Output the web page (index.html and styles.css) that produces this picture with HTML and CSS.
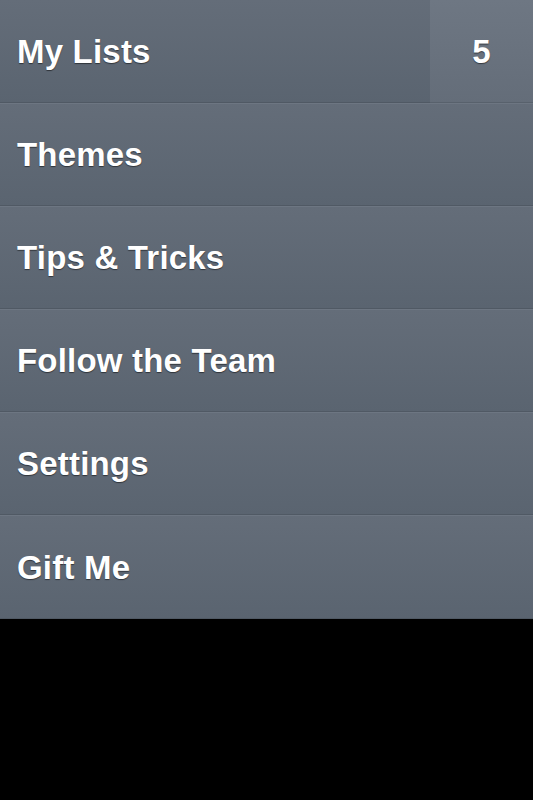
FILE: index.html
```html
<!DOCTYPE html>
<html lang="en">
  <head>
    <meta charset="UTF-8" />
    <meta name="viewport" content="width=device-width, initial-scale=1.0" />
    <title>Menu</title>
    <link rel="stylesheet" href="styles.css">
  </head>
  <body>
    <ul class="menu">
      <li class="item">
        <span class="label">My Lists</span>
        <span class="count">5</span>
      </li>
      <li class="item"><span class="label">Themes</span></li>
      <li class="item"><span class="label">Tips &amp; Tricks</span></li>
      <li class="item"><span class="label">Follow the Team</span></li>
      <li class="item"><span class="label">Settings</span></li>
      <li class="item"><span class="label">Gift Me</span></li>
    </ul>
  </body>
</html>
```

FILE: styles.css
```css
* {
  font-family: "Liberation Sans", Arial, sans-serif;
}
body {
  margin: 0;
  background-color: #000;
}
.menu {
  list-style: none;
  margin: 0;
  padding: 0;
}
.item {
  display: flex;
  align-items: center;
  justify-content: space-between;
  height: 102px;
  border-top: 1px solid #6d7682;
  background-image: linear-gradient(#646d79, #5a6470);
  box-shadow: inset 0 -1px 0 #505964;
}
.item:first-child {
  border-top: none;
  height: 103px;
}
.item:last-child {
  height: 103px;
}
.label {
  padding-left: 17px;
  color: #fff;
  font-size: 33px;
  font-weight: bold;
  letter-spacing: 0.2px;
  text-shadow: 0 1px 1px rgba(0, 0, 0, 0.5);
}
.count {
  display: flex;
  align-items: center;
  justify-content: center;
  align-self: stretch;
  width: 103px;
  color: #fff;
  font-size: 33px;
  font-weight: bold;
  text-shadow: 0 1px 1px rgba(0, 0, 0, 0.5);
  background-image: linear-gradient(#6e7783, #646d79);
  box-shadow: inset 0 -1px 0 #58616c;
}
```
